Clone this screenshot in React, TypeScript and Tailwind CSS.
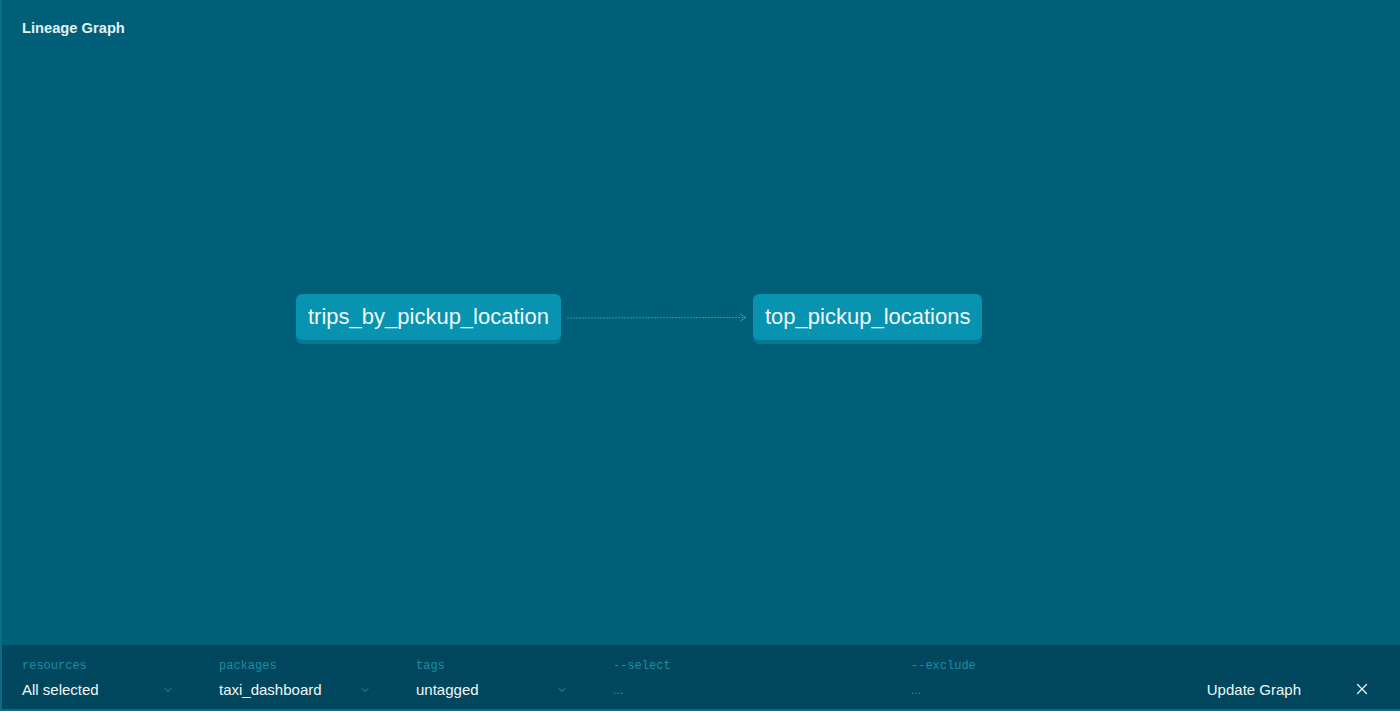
import { ChevronDown, X } from "lucide-react";

const filters = [
  { label: "resources", value: "All selected", select: true, width: "w-[197px]" },
  { label: "packages", value: "taxi_dashboard", select: true, width: "w-[197px]" },
  { label: "tags", value: "untagged", select: true, width: "w-[197px]" },
  { label: "--select", value: "...", select: false, width: "w-[298px]" },
  { label: "--exclude", value: "...", select: false, width: "w-[280px]" },
];

function Node({ name, className }: { name: string; className: string }) {
  return (
    <div
      className={`absolute rounded-[6px] bg-[#0893b0] px-[12px] pb-[10px] pt-[9px] text-[22px] leading-[27px] text-[#eef8fb] shadow-[0_4px_0_#0a7791] ${className}`}
    >
      {name}
    </div>
  );
}

export default function App() {
  return (
    <div className="flex h-[711px] w-[1400px] flex-col border-l-2 border-[#0d6b83] bg-[#005f78] font-['Liberation_Sans',Arial,sans-serif]">
      {/* graph canvas */}
      <div className="relative flex-1">
        <h1 className="px-[20px] pt-[17px] text-[14.7px] font-bold text-[#e3f1f5]">Lineage Graph</h1>

        <Node name="trips_by_pickup_location" className="left-[294px] top-[294px]" />
        <Node name="top_pickup_locations" className="left-[751px] top-[294px]" />

        <svg className="absolute left-[563px] top-[312px]" width="186" height="12" viewBox="0 0 186 12">
          <line x1="2" y1="6" x2="180" y2="5.5" stroke="#2a98b3" strokeWidth="1" strokeDasharray="2 1" />
          <path d="M175 2 L181 5.5 L175 9" fill="none" stroke="#2a98b3" strokeWidth="1" />
        </svg>
      </div>

      {/* filter bar */}
      <div className="flex h-[66px] items-stretch border-b-2 border-[#0d6b83] bg-[#00475d] pl-[20px] pr-[29px]">
        {filters.map((f) => (
          <div key={f.label} className={`flex flex-col pt-[14px] ${f.width}`}>
            <span className="font-['Liberation_Mono',monospace] text-[12px] leading-[14px] text-[#1c8ea9]">
              {f.label}
            </span>
            <div className="mt-[9px] flex w-[152px] items-center justify-between">
              <span
                className={
                  f.select
                    ? "text-[15px] leading-[16px] text-[#f1f8fa]"
                    : "text-[12px] leading-[16px] text-[#2a8fa8]"
                }
              >
                {f.value}
              </span>
              {f.select && <ChevronDown className="h-[12px] w-[12px] text-[#1f93ae]" strokeWidth={2} />}
            </div>
          </div>
        ))}
        <div className="ml-auto flex items-end gap-[52px] pb-[11px]">
          <button className="text-[15px] leading-[16px] text-[#eef7fa]">Update Graph</button>
          <X className="h-[18px] w-[18px] text-[#e8f4f7]" strokeWidth={1.6} />
        </div>
      </div>
    </div>
  );
}
